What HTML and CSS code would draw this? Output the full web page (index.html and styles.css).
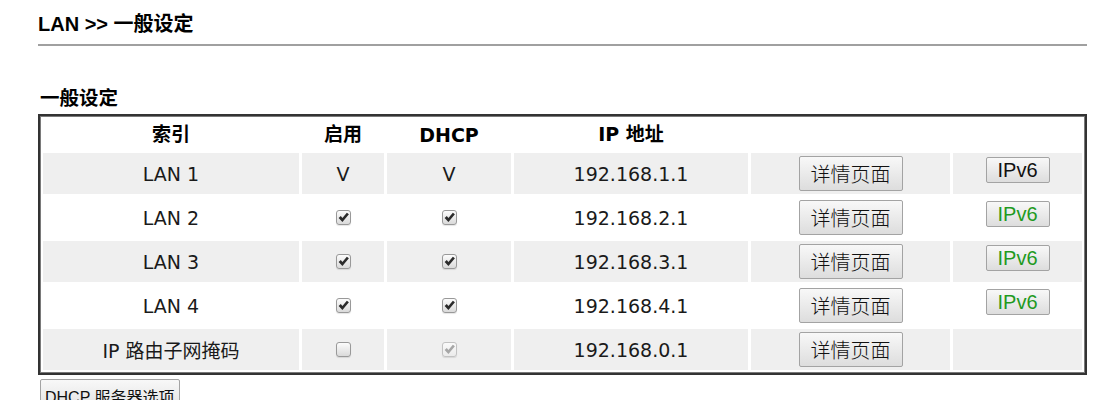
FILE: index.html
```html
<!DOCTYPE html>
<html lang="zh-CN">
<head>
    <meta charset="UTF-8">
    <title>LAN &gt;&gt; 一般设定</title>
    <link rel="stylesheet" href="styles.css">
</head>
<body>
<div class="page">
    <h1 class="page-title">LAN &gt;&gt; 一般设定</h1>
    <div class="rule"></div>
    <h2 class="sec-title">一般设定</h2>
    <table class="lan-table">
        <colgroup>
            <col class="c-idx">
            <col class="c-en">
            <col class="c-dhcp">
            <col class="c-ip">
            <col class="c-det">
            <col class="c-v6">
        </colgroup>
        <tr class="head">
            <th>索引</th>
            <th>启用</th>
            <th class="latin">DHCP</th>
            <th>IP 地址</th>
            <th></th>
            <th></th>
        </tr>
        <tr class="gray">
            <td>LAN 1</td>
            <td>V</td>
            <td>V</td>
            <td>192.168.1.1</td>
            <td><button class="btn btn-det">详情页面</button></td>
            <td><button class="btn btn-v6">IPv6</button></td>
        </tr>
        <tr>
            <td>LAN 2</td>
            <td><span class="cb on"><svg viewBox="0 0 12 12"><path d="M1.5 6.4 L3.5 4.7 L5 6.5 L9.1 1.6 L11 3.1 L5 10.2 Z"/></svg></span></td>
            <td><span class="cb on"><svg viewBox="0 0 12 12"><path d="M1.5 6.4 L3.5 4.7 L5 6.5 L9.1 1.6 L11 3.1 L5 10.2 Z"/></svg></span></td>
            <td>192.168.2.1</td>
            <td><button class="btn btn-det">详情页面</button></td>
            <td><button class="btn btn-v6 green">IPv6</button></td>
        </tr>
        <tr class="gray">
            <td>LAN 3</td>
            <td><span class="cb on"><svg viewBox="0 0 12 12"><path d="M1.5 6.4 L3.5 4.7 L5 6.5 L9.1 1.6 L11 3.1 L5 10.2 Z"/></svg></span></td>
            <td><span class="cb on"><svg viewBox="0 0 12 12"><path d="M1.5 6.4 L3.5 4.7 L5 6.5 L9.1 1.6 L11 3.1 L5 10.2 Z"/></svg></span></td>
            <td>192.168.3.1</td>
            <td><button class="btn btn-det">详情页面</button></td>
            <td><button class="btn btn-v6 green">IPv6</button></td>
        </tr>
        <tr>
            <td>LAN 4</td>
            <td><span class="cb on"><svg viewBox="0 0 12 12"><path d="M1.5 6.4 L3.5 4.7 L5 6.5 L9.1 1.6 L11 3.1 L5 10.2 Z"/></svg></span></td>
            <td><span class="cb on"><svg viewBox="0 0 12 12"><path d="M1.5 6.4 L3.5 4.7 L5 6.5 L9.1 1.6 L11 3.1 L5 10.2 Z"/></svg></span></td>
            <td>192.168.4.1</td>
            <td><button class="btn btn-det">详情页面</button></td>
            <td><button class="btn btn-v6 green">IPv6</button></td>
        </tr>
        <tr class="gray">
            <td>IP 路由子网掩码</td>
            <td><span class="cb"></span></td>
            <td><span class="cb on off"><svg viewBox="0 0 12 12"><path d="M1.5 6.4 L3.5 4.7 L5 6.5 L9.1 1.6 L11 3.1 L5 10.2 Z"/></svg></span></td>
            <td>192.168.0.1</td>
            <td><button class="btn btn-det">详情页面</button></td>
            <td></td>
        </tr>
    </table>
    <button class="btn btn-opt">DHCP 服务器选项</button>
</div>
</body>
</html>
```

FILE: styles.css
```css
*{
    margin: 0;
    padding: 0;
    box-sizing: border-box;
}
body{
    background: #fff;
    color: #000;
    font-family: "DejaVu Sans", "Noto Sans CJK SC", sans-serif;
}
.page{
    width: 1087px;
    padding: 14px 0 0 38px;
}
.page-title{
    font-family: "Liberation Sans", "Noto Sans CJK SC", sans-serif;
    font-size: 20px;
    line-height: 20px;
    font-weight: bold;
}
.rule{
    height: 2px;
    margin-top: 10px;
    background: #a0a0a0;
}
.sec-title{
    font-family: "Liberation Sans", "Noto Sans CJK SC", sans-serif;
    font-size: 19.5px;
    line-height: 20px;
    font-weight: bold;
    margin: 42px 0 6px 2px;
}
.lan-table{
    width: 1049px;
    table-layout: fixed;
    border: 2px solid #333;
    box-shadow: inset 0 0 0 1px #7a7a7a;
    border-spacing: 3px;
    font-size: 19px;
}
.c-idx{ width: 256px; }
.c-en{ width: 82px; }
.c-dhcp{ width: 124px; }
.c-ip{ width: 234px; }
.c-det{ width: 199px; }
.c-v6{ width: 129px; }
.lan-table th{
    height: 31px;
    font-weight: bold;
    text-align: center;
    vertical-align: top;
    padding-top: 0;
}
.lan-table th.latin{
    padding-top: 5px;
}
.lan-table td{
    height: 41px;
    text-align: center;
    vertical-align: middle;
    color: #1a1a1a;
}
.lan-table tr.gray td{
    background: #efefef;
}
.cb{
    display: inline-block;
    width: 15px;
    height: 15px;
    border: 1px solid #999;
    border-radius: 3px;
    background: linear-gradient(#fcfcfc, #dadada);
    box-shadow: 0 1px 1px rgba(0,0,0,0.1);
    vertical-align: middle;
    position: relative;
    top: -2px;
}
.cb svg{
    display: block;
    width: 13px;
    height: 13px;
}
.cb.on svg path{
    fill: #2b2b2b;
}
.cb.off{
    border-color: #c2c2c2;
    background: linear-gradient(#fafafa, #ebebeb);
}
.cb.off svg path{
    fill: #a6a6a6;
}
.btn{
    display: inline-block;
    border: 1px solid #a3a3a3;
    border-radius: 2px;
    background: linear-gradient(#f8f8f8, #dddddd);
    color: #111;
    cursor: pointer;
    vertical-align: middle;
    white-space: nowrap;
}
.btn-det{
    width: 104px;
    height: 35px;
    font-family: "Noto Sans CJK SC", sans-serif;
    font-size: 20px;
    font-weight: 300;
    line-height: 25px;
}
.btn-v6{
    width: 64px;
    height: 26px;
    margin-bottom: 8px;
    font-family: "Liberation Sans", sans-serif;
    font-size: 20px;
    line-height: 22px;
}
.btn-v6.green{
    color: #1f9a1f;
}
.btn-opt{
    margin: 4px 0 0 2px;
    height: 38px;
    padding: 0 4px;
    font-family: "Liberation Sans", "Noto Sans CJK SC", sans-serif;
    font-size: 16px;
    line-height: 36px;
}
```
